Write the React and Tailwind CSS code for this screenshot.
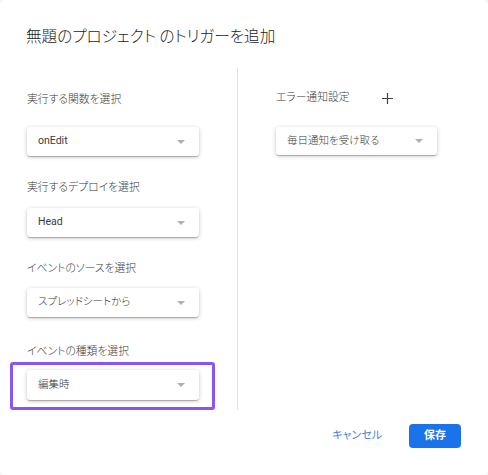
import React from "react";

const font = "[font-family:Roboto,'Noto_Sans_CJK_JP',sans-serif] [font-feature-settings:'palt']";

function Arrow() {
  return (
    <svg width="8" height="4" viewBox="0 0 8 4" className="shrink-0">
      <path d="M0 0 L8 0 L4 4 Z" fill="#b0b0b0" />
    </svg>
  );
}

function Select({ value, className = "", textClass = "font-light" }) {
  return (
    <div
      className={`flex items-center justify-between rounded-[3px] bg-white pl-[11px] pr-[14px] shadow-[0_1px_1px_rgba(0,0,0,0.14),0_2px_1px_-1px_rgba(0,0,0,0.12),0_1px_4px_rgba(0,0,0,0.22)] ${className}`}
    >
      <span className={`text-[10.5px] leading-none text-[#3a3a3a] ${textClass}`}>{value}</span>
      <Arrow />
    </div>
  );
}

function Label({ children, className = "" }) {
  return (
    <div className={`h-[16px] text-[10.8px] font-light leading-[16px] text-[#3a3a3a] ${className}`}>
      {children}
    </div>
  );
}

export default function App() {
  return (
    <div className={`h-[475px] w-[488px] bg-[#f4f4f4] ${font}`}>
      <div className="relative flex h-full w-full flex-col rounded-[5px] bg-white">
        <div className="pl-[26px] pt-[27px] text-[15.6px] font-light leading-[20px] text-[#222]">
          無題のプロジェクト のトリガーを追加
        </div>

        <div className="mt-[21px] flex">
          <div className="w-[237px] pl-[27px]">
            <Label className="mt-[24px]">実行する関数を選択</Label>
            <Select value="onEdit" textClass="font-normal" className="mt-[19px] h-[29px] w-[172px]" />
            <Label className="mt-[24px]">実行するデプロイを選択</Label>
            <Select value="Head" textClass="font-normal" className="mt-[12px] h-[29px] w-[172px]" />
            <Label className="mt-[24px]">イベントのソースを選択</Label>
            <Select value="スプレッドシートから" className="mt-[11px] h-[29px] w-[172px]" />
            <Label className="mt-[27px]">イベントの種類を選択</Label>
            <div className="relative mt-[10px] w-[172px]">
              <Select value="編集時" className="h-[30px] w-[172px]" />
              <div className="pointer-events-none absolute -bottom-[10px] -left-[17px] -right-[16px] -top-[8px] rounded-[3px] border-[3px] border-[#8b55f0]" />
            </div>
          </div>

          <div className="h-[342px] w-px bg-[#e3e3e3]" />

          <div className="pl-[38px]">
            <div className="mt-[22px] flex h-[16px] items-center">
              <span className="text-[10.8px] font-light leading-[16px] text-[#3a3a3a]">エラー通知設定</span>
              <svg width="11" height="11" viewBox="0 0 11 11" className="ml-[32px]">
                <path d="M5.5 0 V11 M0 5.5 H11" stroke="#444" strokeWidth="1.2" />
              </svg>
            </div>
            <Select value="毎日通知を受け取る" className="mt-[21px] h-[28px] w-[161px]" />
          </div>
        </div>

        <div className="mt-auto flex items-center justify-end pb-[27px] pr-[27px]">
          <span className="mr-[27px] text-[11px] text-[#4a85e0]">キャンセル</span>
          <div className="flex h-[24px] w-[52px] items-center justify-center rounded-[4px] bg-[#1a73e8] text-[11px] font-bold text-white">
            保存
          </div>
        </div>
      </div>
    </div>
  );
}
